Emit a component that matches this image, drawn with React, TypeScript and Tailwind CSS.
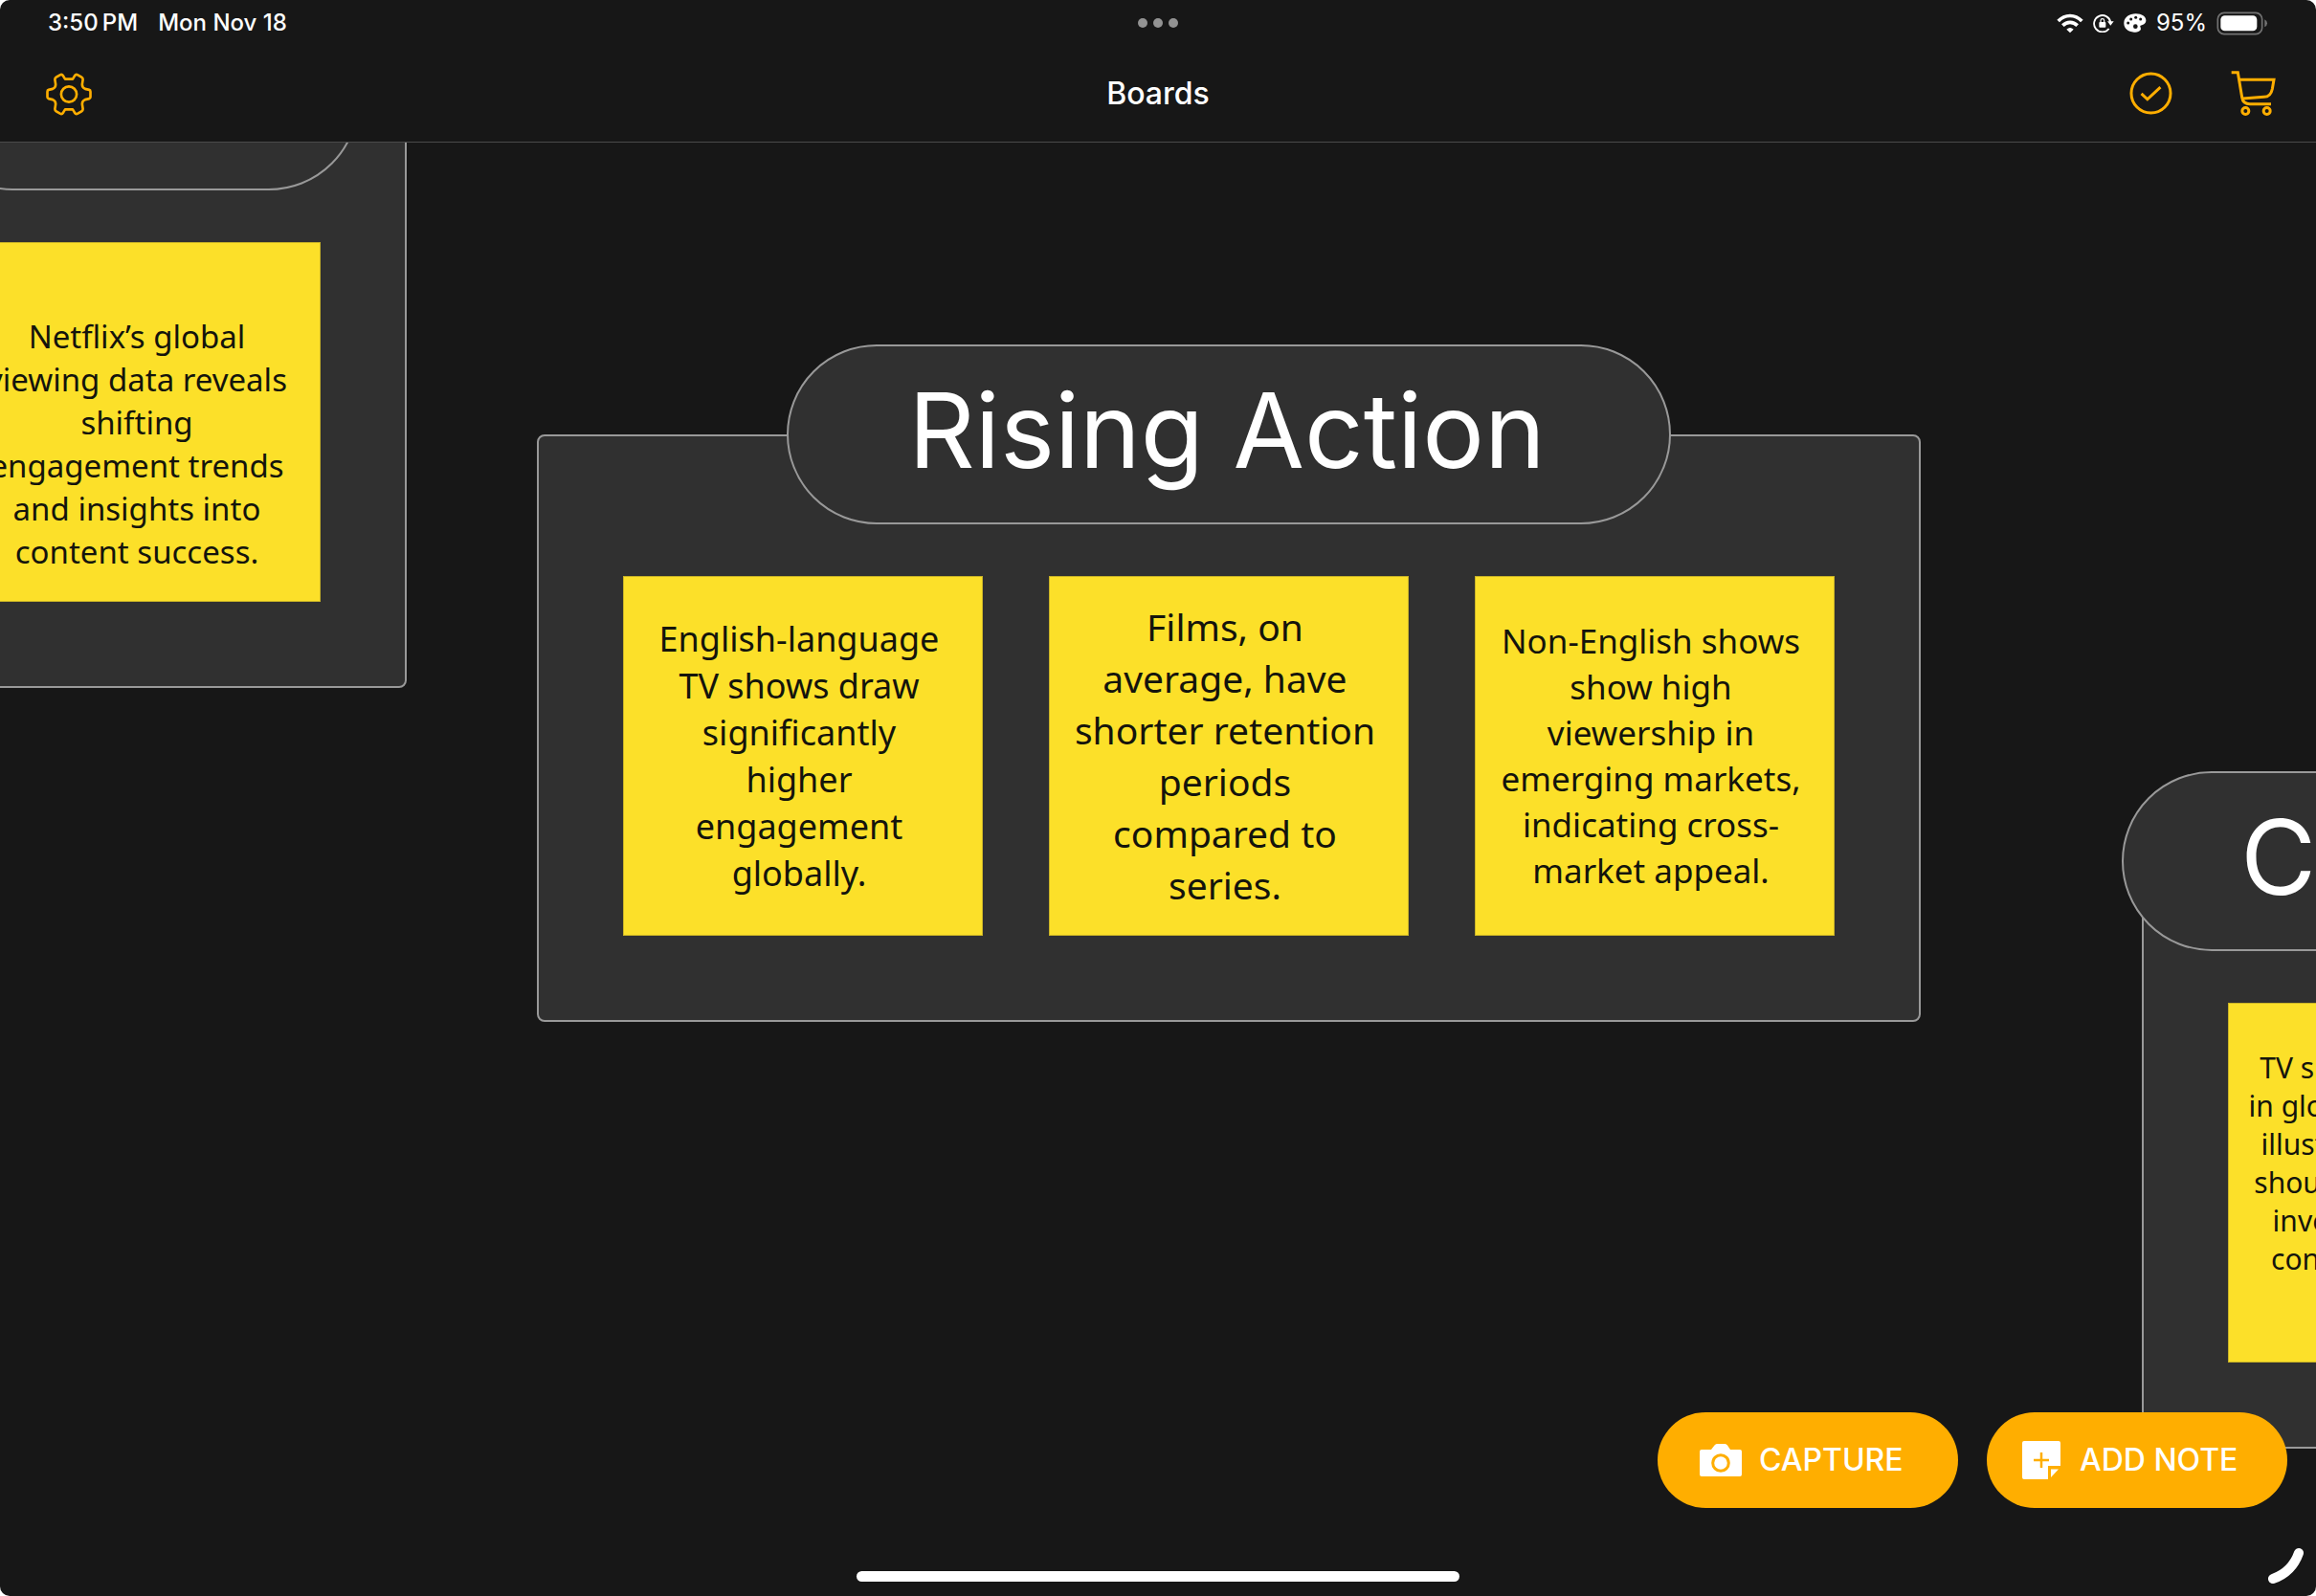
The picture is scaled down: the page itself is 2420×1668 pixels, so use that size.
import React from "react";

type NoteData = { text: string; size: string };
type BoardData = { title: string; place: string; pill: string; notes: NoteData[] };

const boards: BoardData[] = [
  {
    title: "",
    place: "left-[-131px] top-[-138px]",
    pill: "w-[456px]",
    notes: [
      {
        text: "\nNetflix’s global\nviewing data reveals\nshifting\nengagement trends\nand insights into\ncontent success.",
        size: "text-[33px] leading-[45px]",
      },
    ],
  },
  {
    title: "Rising Action",
    place: "left-[561px] top-[211px]",
    pill: "w-[924px]",
    notes: [
      {
        text: "English-language\nTV shows draw\nsignificantly\nhigher\nengagement\nglobally.",
        size: "text-[36px] leading-[49px]",
      },
      {
        text: "Films, on\naverage, have\nshorter retention\nperiods\ncompared to\nseries.",
        size: "text-[39px] leading-[54px]",
      },
      {
        text: "Non-English shows\nshow high\nviewership in\nemerging markets,\nindicating cross-\nmarket appeal.",
        size: "text-[35px] leading-[48px]",
      },
    ],
  },
  {
    title: "Climax",
    place: "left-[2217px] top-[657px]",
    pill: "w-[598px]",
    notes: [
      {
        text: "TV shows’ dominance\nin global environments\nillustrates companies\nshould maximise their\ninvestment in more\ncontent to maintain\ngrowth.",
        size: "text-[30px] leading-[40px]",
      },
    ],
  },
];

function Note({ text, size }: NoteData) {
  return (
    <article className="flex size-[376px] shrink-0 items-center justify-center border border-[#c9b327] bg-[#fce029] pr-2">
      <p className={`whitespace-pre text-center font-['Noto_Sans',sans-serif] text-[#14140c] ${size}`}>{text}</p>
    </article>
  );
}

function Board({ title, place, pill, notes }: BoardData) {
  return (
    <section className={`absolute flex flex-col items-center ${place}`}>
      <h2
        className={`relative z-10 flex h-[188px] shrink-0 items-center justify-center rounded-full border-2 border-[#999999] bg-[#303030] pr-1 pb-2 text-[108px] leading-none ${pill}`}
      >
        {title}
      </h2>
      <div className="-mt-[94px] flex gap-[69px] rounded-lg border-2 border-[#999999] bg-[#303030] px-[88px] pt-[146px] pb-[88px]">
        {notes.map((n) => (
          <Note key={n.text} {...n} />
        ))}
      </div>
    </section>
  );
}

function GearIcon() {
  return (
    <svg viewBox="144 226 144 136" className="h-[45px] w-12" fill="none" stroke="#ffae00" strokeWidth="8" strokeLinejoin="round">
      <path d="M204 246H228L234 236Q238 230 244 233L256 240Q261 243 260 249L258 262Q257 273 267 277L280 280Q284 281 284 286V302Q284 307 280 308L267 311Q257 315 258 326L260 339Q261 345 256 348L244 355Q238 358 234 352L228 342H204L198 352Q194 358 188 355L176 348Q171 345 172 339L174 326Q175 315 165 311L152 308Q148 307 148 302V286Q148 281 152 280L165 277Q175 273 174 262L172 249Q171 243 176 240L188 233Q194 230 198 236Z" />
      <circle cx="216" cy="294" r="24.5" />
    </svg>
  );
}

function CheckIcon() {
  return (
    <svg viewBox="316 223 136 136" className="size-[45px]" fill="none" stroke="#ffae00" strokeWidth="9">
      <circle cx="384" cy="291" r="62" />
      <path d="M354 292L373 310L414 272" />
    </svg>
  );
}

function CartIcon() {
  return (
    <svg viewBox="634 216 144 144" className="size-12" fill="none" stroke="#ffae00" strokeWidth="9">
      <path d="M636 224H656L669 302Q672 323 694 323H760" />
      <path d="M660 247H769L764 276Q759 301 738 301L671 306" />
      <circle cx="680" cy="345" r="10.5" />
      <circle cx="747" cy="345" r="10.5" />
    </svg>
  );
}

function WifiIcon() {
  return (
    <svg viewBox="87 40 84 63" className="h-[21px] w-7" fill="none" stroke="white" strokeWidth="11">
      <path d="M92 64Q108 47.500 129 47.500T166 64" />
      <path d="M106 78Q116 68 129 68T152 78" />
      <path d="M118 90Q129 80 140 90L129 101Z" fill="white" stroke="none" />
    </svg>
  );
}

function LockIcon() {
  return (
    <svg viewBox="200 40 66 60" className="h-5 w-[22px]" fill="none" stroke="white" strokeWidth="5.500">
      <path d="M255 68A26 26 0 1 0 250 88" />
      <path d="M245 65H265L255 78Z" fill="white" stroke="none" />
      <rect x="219" y="67" width="21" height="17" rx="3" fill="white" stroke="none" />
      <path d="M224 68V62Q224 57 229.500 57T235 62V68" strokeWidth="3.500" />
    </svg>
  );
}

function PaletteIcon() {
  return (
    <svg viewBox="296 40 72 60" className="h-5 w-6">
      <path
        d="M334 41C354 41 367 51 366 63C365 74 354 76 349 78C345 80 352 86 349 92C345 98 337 100 329 99C309 98 296 86 297 69C298 52 314 41 334 41Z"
        fill="white"
      />
      <g fill="#171717">
        <circle cx="310" cy="70" r="4.500" />
        <circle cx="319" cy="58" r="4.500" />
        <circle cx="334" cy="53" r="4.500" />
        <circle cx="349" cy="58" r="4.500" />
        <circle cx="333" cy="81" r="7" />
      </g>
    </svg>
  );
}

function BatteryIcon() {
  return (
    <svg viewBox="584 35 162 75" className="h-[25px] w-[54px]">
      <rect x="588" y="39" width="139" height="67" rx="20" fill="none" stroke="#727272" strokeWidth="5" />
      <rect x="597" y="48" width="114" height="48" rx="13" fill="white" />
      <path d="M735 60Q743 64 743 72T735 84Z" fill="#727272" />
    </svg>
  );
}

function CameraIcon() {
  return (
    <svg viewBox="0 0 44 34" className="h-[34px] w-11">
      <path d="M2 6H12L15.500 1.500Q16.500 0 18 0H26.500Q28 0 29 1.500L32 6H42Q44 6 44 8V32Q44 34 42 34H2Q0 34 0 32V8Q0 6 2 6Z" fill="white" />
      <circle cx="22" cy="20" r="8.300" fill="white" stroke="#ffae00" strokeWidth="3" />
    </svg>
  );
}

function AddNoteIcon() {
  return (
    <svg viewBox="0 0 40 40" className="size-10">
      <path d="M2 0H38Q40 0 40 2V26H27V40H2Q0 40 0 38V2Q0 0 2 0Z" fill="white" />
      <path d="M30 29.500H38L30 38Z" fill="white" />
      <path d="M12 20H28M20 12V28" stroke="#ffae00" strokeWidth="2.500" />
    </svg>
  );
}

export default function App() {
  return (
    <div className="h-screen bg-white">
      <div className="relative flex h-full flex-col overflow-hidden rounded-[10px] bg-[#171717] font-['Inter',sans-serif] text-white">
        <header className="shrink-0 border-b border-[#4a4a4a]">
          <div className="grid h-12 grid-cols-3 items-center px-[50px] text-2xl font-medium">
            <div className="flex gap-[21px]">
              <time>3:50{"\u2009"}PM</time>
              <span>Mon Nov 18</span>
            </div>
            <div className="flex justify-center gap-1.5">
              <span className="size-2.5 rounded-full bg-[#939393]" />
              <span className="size-2.5 rounded-full bg-[#939393]" />
              <span className="size-2.5 rounded-full bg-[#939393]" />
            </div>
            <div className="flex items-center justify-end gap-2.5">
              <WifiIcon />
              <LockIcon />
              <PaletteIcon />
              <span className="font-normal">95%</span>
              <BatteryIcon />
            </div>
          </div>
          <div className="grid h-[100px] grid-cols-3 items-center px-[41px]">
            <button type="button" aria-label="Settings" className="justify-self-start pl-[7px]">
              <GearIcon />
            </button>
            <h1 className="justify-self-center text-[32px] leading-10 font-medium">Boards</h1>
            <div className="flex items-center gap-[61px] justify-self-end pb-0.5">
              <button type="button" aria-label="Select">
                <CheckIcon />
              </button>
              <button type="button" aria-label="Store">
                <CartIcon />
              </button>
            </div>
          </div>
        </header>

        <main className="relative flex-1 overflow-hidden">
          {boards.map((b) => (
            <Board key={b.place} {...b} />
          ))}
        </main>

        <div className="absolute right-[30px] bottom-[92px] z-20 flex gap-[30px] text-[32px] font-medium">
          <button type="button" className="flex h-[100px] w-[314px] items-center gap-[18px] rounded-full bg-[#ffae00] pl-11">
            <CameraIcon />
            CAPTURE
          </button>
          <button type="button" className="flex h-[100px] w-[314px] items-center gap-5 rounded-full bg-[#ffae00] pl-[37px]">
            <AddNoteIcon />
            ADD NOTE
          </button>
        </div>
        <div className="absolute bottom-[15px] left-1/2 z-20 h-[11px] w-[630px] -translate-x-1/2 rounded-full bg-white" />
        <svg viewBox="0 0 40 42" className="absolute right-3 bottom-3 z-20 h-[42px] w-10">
          <path d="M34 9Q27 29 7 36" fill="none" stroke="white" strokeWidth="10" strokeLinecap="round" />
        </svg>
      </div>
    </div>
  );
}
